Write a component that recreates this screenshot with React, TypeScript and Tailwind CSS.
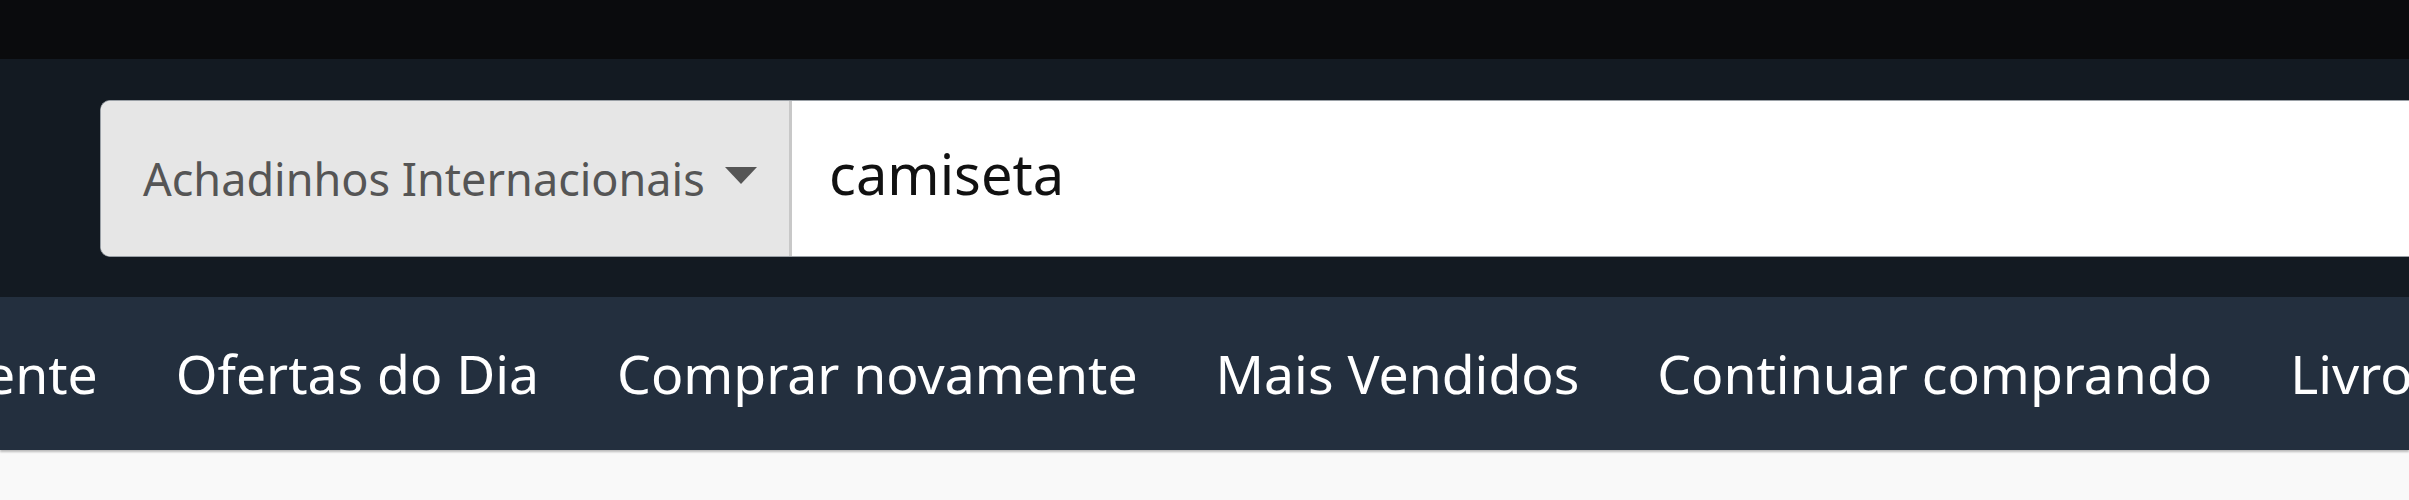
import React from "react";

const font = { fontFamily: '"Noto Sans", "Open Sans", sans-serif' };

export default function App() {
  const links = [
    "Atendimento ao Cliente",
    "Ofertas do Dia",
    "Comprar novamente",
    "Mais Vendidos",
    "Continuar comprando",
    "Livros",
    "Moda",
  ];
  return (
    <div className="w-[2409px] h-[500px] overflow-hidden bg-[#f9f9f9]" style={font}>
      <div className="h-[59px] bg-[#0a0b0d]" />
      <div className="h-[238px] bg-[#131a22] pl-[100px] pt-[41px]">
        <div className="flex h-[157px] rounded-l-[10px] overflow-hidden border border-r-0 border-[#9aa0a6] bg-white">
          <div className="flex w-[691px] shrink-0 items-center bg-[#e6e6e6] border-r-[3px] border-[#c8c8c8] pl-[42px]">
            <span className="text-[45px] leading-none text-[#555555] whitespace-nowrap">Achadinhos Internacionais</span>
            <svg className="ml-[20px] mt-[-6px]" width="32" height="17" viewBox="0 0 32 17">
              <path d="M0 0 L32 0 L16 17 Z" fill="#555555" />
            </svg>
          </div>
          <div className="flex flex-1 items-center pl-[37px] pb-[12px]">
            <span className="text-[56px] leading-none text-[#111111] whitespace-nowrap">camiseta</span>
          </div>
        </div>
      </div>
      <div className="h-[153px] bg-[#232f3e] overflow-hidden flex items-center shadow-[0_2px_2px_rgba(0,0,0,0.25)]">
        <div className="flex gap-[78px] ml-[-495px] whitespace-nowrap">
          {links.map((l) => (
            <span key={l} className="text-[53.5px] leading-none text-white">
              {l}
            </span>
          ))}
        </div>
      </div>
    </div>
  );
}
